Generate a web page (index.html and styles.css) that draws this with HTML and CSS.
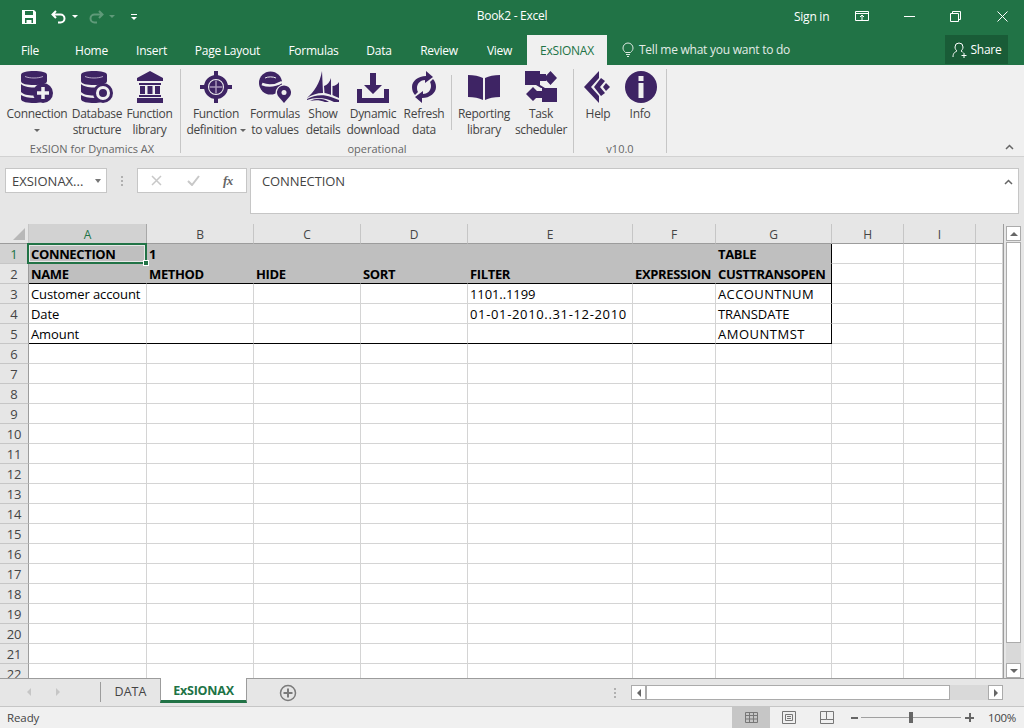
FILE: index.html
```html
<!DOCTYPE html>
<html lang="en">
<head>
<meta charset="utf-8">
<title>Book2 - Excel</title>
<link rel="stylesheet" href="styles.css">
</head>
<body>
<div class="app">
  <header class="titlebar">
    <div class="qat">
      <svg class="q-save" width="16" height="16" viewBox="0 0 16 16"><path d="M1 1h12l2 2v12H1z M4 2v4h8V2z M4 9v5h1.500v-3h5v3H12V9z" fill="#fff" fill-rule="evenodd"/></svg>
      <svg class="q-undo" width="16" height="14" viewBox="0 0 16 14"><path d="M5 1L1.500 4.500 5 8M2 4.500h7.500a4 4 0 0 1 0 8H7" fill="none" stroke="#fff" stroke-width="2"/></svg>
      <span class="caret"></span>
      <svg class="q-redo" width="16" height="14" viewBox="0 0 16 14"><path d="M11 1l3.500 3.500L11 8M14 4.500H6.500a4 4 0 0 0 0 8H9" fill="none" stroke="#5f9a79" stroke-width="2"/></svg>
      <span class="caret dim"></span>
      <span class="q-more"></span>
    </div>
    <div class="doc-title">Book2 - Excel</div>
    <div class="win">
      <span class="sign">Sign in</span>
      <svg class="w-disp" width="14" height="11" viewBox="0 0 14 11"><path d="M.5.500h13v9H.5zM.5 2.500h13M7 9V4.500M5 6l2-2 2 2" fill="none" stroke="#fff"/></svg>
      <svg class="w-min" width="11" height="1" viewBox="0 0 11 1"><path d="M0 .500h11" stroke="#fff"/></svg>
      <svg class="w-res" width="11" height="11" viewBox="0 0 11 11"><path d="M.5 2.500h8v8h-8zM2.500 2.500v-2h8v8h-2" fill="none" stroke="#fff"/></svg>
      <svg class="w-close" width="11" height="11" viewBox="0 0 11 11"><path d="M.5.500l10 10M10.500.500l-10 10" stroke="#fff"/></svg>
    </div>
  </header>
  <nav class="tabs">
    <span class="tab t-file">File</span>
    <span class="tab t-home">Home</span>
    <span class="tab t-insert">Insert</span>
    <span class="tab t-page">Page Layout</span>
    <span class="tab t-form">Formulas</span>
    <span class="tab t-data">Data</span>
    <span class="tab t-review">Review</span>
    <span class="tab t-view">View</span>
    <span class="tab t-ex active">ExSIONAX</span>
    <svg class="bulb" width="12" height="15" viewBox="0 0 12 15"><path d="M3.500 10.500C2 9 1 8 1 6a5 5 0 0 1 10 0c0 2-1 3-2.500 4.500zM4 12.500h4M5 14.500h2" fill="none" stroke="#dfeae3"/></svg>
    <span class="tell">Tell me what you want to do</span>
    <span class="share">
      <svg width="16" height="16" viewBox="0 0 16 16"><path d="M1 15c0-4 2-5 4-6-1-1-2-2-2-4a4 4 0 0 1 8 0c0 2-1 3-2 4 1 .4 1.500.8 2 1.500M12 11v5M9.500 13.500h5" fill="none" stroke="#fff"/></svg>
      Share
    </span>
  </nav>

  <section class="ribbon">
    <div class="group g1">
      <div class="btns">
        <div class="btn b-conn">
          <svg class="ico" width="32" height="32" viewBox="0 0 32 32"><path class="p" d="M0 4C0 1 6 0 13 0s13 1 13 4v6c0 3-6 4-13 4S0 13 0 10z"/><path d="M4 5.500c5 2 13 2 18 0" fill="none" stroke="#b7a9c6"/><path class="p" d="M0 13c2 2 7 3.500 13 3.500S24 15 26 13v5c-3 1-6 4-7 6-2 .4-4 .5-6 .5-6 0-11-1-13-3.500z"/><path class="p" d="M0 24c3 2 8 3 13 3h5c.4 1.500 1 3 2 4-2 .6-4 1-7 1-6 0-13-1-13-4z"/><circle class="p" cx="22" cy="22" r="10"/><path d="M22 16v12M16 22h12" stroke="#f0f0f0" stroke-width="3.500"/></svg>
          <span class="lbl">Connection<br><i class="dd"></i></span>
        </div>
        <div class="btn b-db">
          <svg class="ico" width="32" height="32" viewBox="0 0 32 32"><path class="p" d="M0 4C0 1 6 0 13 0s13 1 13 4v6c0 3-6 4-13 4S0 13 0 10z"/><path d="M4 5.500c5 2 13 2 18 0" fill="none" stroke="#b7a9c6"/><path class="p" d="M0 13c2 2 7 3.500 13 3.500S24 15 26 13v5c-3 1-6 4-7 6-2 .4-4 .5-6 .5-6 0-11-1-13-3.500z"/><path class="p" d="M0 24c3 2 8 3 13 3h5c.4 1.500 1 3 2 4-2 .6-4 1-7 1-6 0-13-1-13-4z"/><circle class="p" cx="22" cy="22" r="10"/><circle cx="22" cy="22" r="5.500" fill="none" stroke="#f0f0f0" stroke-width="3"/></svg>
          <span class="lbl">Database<br>structure</span>
        </div>
        <div class="btn b-lib">
          <svg class="ico" width="26" height="32" viewBox="0 0 26 32"><path class="p" d="M13 0l13 7v3H0V7zM0 27h26v5H0zM2 12h22v2H2zM2 24h22v2H2zM3 15h5v8H3zM10.500 15h5v8h-5zM18 15h5v8h-5z"/></svg>
          <span class="lbl">Function<br>library</span>
        </div>
      </div>
      <div class="gname">ExSION for Dynamics AX</div>
    </div>
    <div class="group g2">
      <div class="btns">
        <div class="btn b-fd">
          <svg class="ico" width="32" height="32" viewBox="0 0 32 32"><circle cx="16" cy="16" r="10" fill="none" stroke="#3e2464" stroke-width="4"/><path class="p" d="M14 0h4v6h-4zM14 26h4v6h-4zM0 14h6v4H0zM26 14h6v4h-6z"/><circle class="p" cx="16" cy="16" r="7"/><path d="M16 9.500v13M9.500 16h13" stroke="#a997bb" stroke-width="1.500"/></svg>
          <span class="lbl">Function<br>definition <i class="dd"></i></span>
        </div>
        <div class="btn b-fv">
          <svg class="ico" width="32" height="32" viewBox="0 0 32 32"><circle class="p" cx="11.500" cy="12" r="11.500"/><path d="M6 7c3-1.500 8-1.500 11 0" fill="none" stroke="#f0f0f0"/><path d="M3 13c6 2.500 13 2 20-2" fill="none" stroke="#f0f0f0" stroke-width="2.500"/><circle cx="25" cy="22" r="8.500" fill="#f0f0f0"/><path class="p" d="M25 32l-6-7a7 7 0 1 1 12 0z"/><circle cx="25" cy="21.500" r="2.500" fill="#f0f0f0"/></svg>
          <span class="lbl">Formulas<br>to values</span>
        </div>
        <div class="btn b-sd">
          <svg class="ico" width="32" height="32" viewBox="0 0 32 32"><path class="p" d="M15 0l1 22C10 22 4 24 0 27 7 21 13 12 15 0zM24 7v17c-2-1-5-2-6.500-2L17 15c3-1 6-4 7-8zM32 11v16c-2-1-5-2-6.500-3v-9c2.500 0 5.500-2 6.500-4zM0 28c7-4 16-5 24-2l8 3v2h-5C18 26 8 26 0 29zM3 30c6-3 13-3 19 1h-4c-5-2-10-2-15-1z"/></svg>
          <span class="lbl">Show<br>details</span>
        </div>
        <div class="btn b-dl">
          <svg class="ico down" width="32" height="30" viewBox="0 0 32 30"><path class="p" d="M13 0h6v12h6L16 21 7 12h6zM0 16h5v9h22v-9h5v14H0z"/></svg>
          <span class="lbl">Dynamic<br>download</span>
        </div>
        <div class="btn b-rf">
          <svg class="ico" width="24" height="32" viewBox="0 0 24 32"><path class="p" d="M14 0l7 6-8 6V9C9 9 5 12 5 17c0 2 .5 3 1 4l-3 3c-2-2-3-5-3-8C0 10 6 5 14 5zM10 32l-7-6 8-6v3c4 0 8-3 8-8 0-2-.5-3-1-4l3-3c2 2 3 5 3 8 0 6-6 11-14 11z"/></svg>
          <span class="lbl">Refresh<br>data</span>
        </div>
        <span class="inner-sep"></span>
        <div class="btn b-rl">
          <svg class="ico book" width="32" height="25" viewBox="0 0 32 25"><path class="p" d="M0 0c6 0 11 1 15 3v22c-4-2-9-3-15-3zM32 0c-6 0-11 1-15 3v22c4-2 9-3 15-3z"/></svg>
          <span class="lbl">Reporting<br>library</span>
        </div>
        <div class="btn b-ts">
          <svg class="ico tasks" width="32" height="31" viewBox="0 0 32 31"><path class="p" d="M0 0h15v14H0zM15 3h6v7h-6zM25.500 0l6.500 7-6.500 7-6.500-7zM17 17h15v14H17zM11 20h7v7h-7zM8 16l7 7-7 7-7-7zM11 14h4l5 3h-4z"/></svg>
          <span class="lbl">Task<br>scheduler</span>
        </div>
      </div>
      <div class="gname">operational</div>
    </div>
    <div class="group g3">
      <div class="btns">
        <div class="btn b-hp">
          <svg class="ico help" width="26" height="32" viewBox="0 0 26 32"><path class="p" d="M0 16L15 0v7L7 16l8 9v7zM17 7l4 3-5 6 5 6-4 3-7-9zM22 12l4 4-4 4-3-4z"/></svg>
          <span class="lbl">Help</span>
        </div>
        <div class="btn b-in">
          <svg class="ico info" width="32" height="32" viewBox="0 0 32 32"><circle class="p" cx="16" cy="16" r="16"/><path d="M13.500 5h5v5h-5zM13.500 12h5v15h-5z" fill="#f0f0f0"/></svg>
          <span class="lbl">Info</span>
        </div>
      </div>
      <div class="gname">v10.0</div>
    </div>
    <svg class="collapse" width="9" height="6" viewBox="0 0 9 6"><path d="M1 5l3.500-3.500L8 5" fill="none" stroke="#666" stroke-width="1.500"/></svg>
  </section>

  <section class="formula">
    <div class="namebox"><span>EXSIONAX...</span><i class="nb-caret"></i></div>
    <div class="fdots"><i></i><i></i><i></i></div>
    <div class="fbtns">
      <svg width="11" height="11" viewBox="0 0 11 11"><path d="M1 1l9 9M10 1l-9 9" stroke="#c8c8c8" stroke-width="1.500"/></svg>
      <svg width="13" height="11" viewBox="0 0 13 11"><path d="M1 6l4 4 7-9" fill="none" stroke="#c8c8c8" stroke-width="2"/></svg>
      <span class="fx">fx</span>
    </div>
    <div class="finput"><span>CONNECTION</span>
      <svg class="fcollapse" width="9" height="6" viewBox="0 0 9 6"><path d="M1 5l3.500-3.500L8 5" fill="none" stroke="#666" stroke-width="1.500"/></svg>
    </div>
  </section>

  <section class="sheet">
    <div class="gridwrap">
      <table class="grid">
        <colgroup><col class="c0"><col class="ca"><col class="cb"><col class="cb"><col class="cb"><col class="ce"><col class="cf"><col class="cg"><col class="ch"><col class="ch"><col class="cj"></colgroup>
        <thead><tr><th class="corner"><i></i></th><th class="sel">A</th><th>B</th><th>C</th><th>D</th><th>E</th><th>F</th><th>G</th><th>H</th><th>I</th><th class="last"></th></tr></thead>
        <tbody>
          <tr class="hd"><th class="sel">1</th><td class="b active-cell">CONNECTION<span class="fill-handle"></span></td><td class="b">1</td><td></td><td></td><td></td><td></td><td class="b ed">TABLE</td><td class="plain"></td><td class="plain"></td><td class="plain"></td></tr>
          <tr class="hd end"><th>2</th><td class="b">NAME</td><td class="b">METHOD</td><td class="b">HIDE</td><td class="b">SORT</td><td class="b">FILTER</td><td class="b">EXPRESSION</td><td class="b ed">CUSTTRANSOPEN</td><td class="plain"></td><td class="plain"></td><td class="plain"></td></tr>
          <tr><th>3</th><td>Customer account</td><td></td><td></td><td></td><td>1101..1199</td><td></td><td class="ed sp-acc">ACCOUNTNUM</td><td></td><td></td><td></td></tr>
          <tr><th>4</th><td>Date</td><td></td><td></td><td></td><td class="sp-date">01-01-2010..31-12-2010</td><td></td><td class="ed">TRANSDATE</td><td></td><td></td><td></td></tr>
          <tr class="end"><th>5</th><td>Amount</td><td></td><td></td><td></td><td></td><td></td><td class="ed sp-amt">AMOUNTMST</td><td></td><td></td><td></td></tr>
          <tr><th>6</th><td></td><td></td><td></td><td></td><td></td><td></td><td></td><td></td><td></td><td></td></tr>
          <tr><th>7</th><td></td><td></td><td></td><td></td><td></td><td></td><td></td><td></td><td></td><td></td></tr>
          <tr><th>8</th><td></td><td></td><td></td><td></td><td></td><td></td><td></td><td></td><td></td><td></td></tr>
          <tr><th>9</th><td></td><td></td><td></td><td></td><td></td><td></td><td></td><td></td><td></td><td></td></tr>
          <tr><th>10</th><td></td><td></td><td></td><td></td><td></td><td></td><td></td><td></td><td></td><td></td></tr>
          <tr><th>11</th><td></td><td></td><td></td><td></td><td></td><td></td><td></td><td></td><td></td><td></td></tr>
          <tr><th>12</th><td></td><td></td><td></td><td></td><td></td><td></td><td></td><td></td><td></td><td></td></tr>
          <tr><th>13</th><td></td><td></td><td></td><td></td><td></td><td></td><td></td><td></td><td></td><td></td></tr>
          <tr><th>14</th><td></td><td></td><td></td><td></td><td></td><td></td><td></td><td></td><td></td><td></td></tr>
          <tr><th>15</th><td></td><td></td><td></td><td></td><td></td><td></td><td></td><td></td><td></td><td></td></tr>
          <tr><th>16</th><td></td><td></td><td></td><td></td><td></td><td></td><td></td><td></td><td></td><td></td></tr>
          <tr><th>17</th><td></td><td></td><td></td><td></td><td></td><td></td><td></td><td></td><td></td><td></td></tr>
          <tr><th>18</th><td></td><td></td><td></td><td></td><td></td><td></td><td></td><td></td><td></td><td></td></tr>
          <tr><th>19</th><td></td><td></td><td></td><td></td><td></td><td></td><td></td><td></td><td></td><td></td></tr>
          <tr><th>20</th><td></td><td></td><td></td><td></td><td></td><td></td><td></td><td></td><td></td><td></td></tr>
          <tr><th>21</th><td></td><td></td><td></td><td></td><td></td><td></td><td></td><td></td><td></td><td></td></tr>
          <tr><th>22</th><td></td><td></td><td></td><td></td><td></td><td></td><td></td><td></td><td></td><td></td></tr>
        </tbody>
      </table>
    </div>
    <div class="vscroll">
      <span class="sbtn up"><i></i></span>
      <span class="vthumb"></span>
      <span class="vtrack"></span>
      <span class="sbtn down"><i></i></span>
    </div>
  </section>

  <section class="sheettabs">
    <i class="nav-l"></i><i class="nav-r"></i>
    <span class="st-sep"></span>
    <span class="st">DATA</span>
    <span class="st on">ExSIONAX</span>
    <svg class="plus" width="20" height="20" viewBox="0 0 20 20"><circle cx="10" cy="10" r="7.500" fill="none" stroke="#7b7b7b" stroke-width="1.500"/><path d="M10 5.500v9M5.500 10h9" stroke="#7b7b7b" stroke-width="2"/></svg>
    <div class="hdots"><i></i><i></i><i></i></div>
    <div class="hscroll">
      <span class="hbtn"><i class="hl"></i></span>
      <span class="hthumb"></span>
      <span class="htrack"></span>
      <span class="hbtn"><i class="hr"></i></span>
    </div>
  </section>

  <footer class="status">
    <span class="ready">Ready</span>
    <span class="view on">
      <svg width="13" height="11" viewBox="0 0 13 11"><path d="M.5.500h12v10H.5zM4.500.500v10M8.500.500v10M.5 3.500h12M.5 7h12" fill="none" stroke="#777"/></svg>
    </span>
    <span class="view">
      <svg width="14" height="13" viewBox="0 0 14 13"><path d="M.5.500h13v12H.5zM3.500 3.500h7v6h-7zM5 5.500h4M5 7.500h4" fill="none" stroke="#777"/></svg>
    </span>
    <span class="view">
      <svg width="14" height="13" viewBox="0 0 14 13"><path d="M.5.500h13v12H.5zM.5 8.500h6v-8M6.500 8.500h7" fill="none" stroke="#777"/></svg>
    </span>
    <span class="zminus"></span>
    <span class="zslider"><i></i></span>
    <span class="zplus"></span>
    <span class="zpct">100%</span>
  </footer>
</div>
</body>
</html>
```

FILE: styles.css
```css
* { box-sizing: border-box; }
html, body { margin: 0; padding: 0; }
body { font-family: "Open Sans", "Noto Sans", sans-serif; overflow: hidden; }
.app { width: 1024px; height: 728px; display: flex; flex-direction: column; overflow: hidden; background: #e6e6e6; }

/* Title bar */
.titlebar { height: 33px; background: #217346; color: #fff; display: flex; align-items: center; font-size: 12px; letter-spacing: -.25px; flex: none; }
.qat { width: 424px; display: flex; align-items: center; padding-left: 21px; }
.q-undo { margin-left: 14px; }
.caret { width: 0; height: 0; border: 3px solid transparent; border-top-color: #fff; border-bottom: 0; margin-left: 5px; }
.caret.dim { border-top-color: #5f9a79; }
.q-redo { margin-left: 10px; }
.qat .dim { margin-left: 5px; }
.q-more { margin-left: 16px; width: 6px; height: 6px; border-top: 1px solid #fff; }
.q-more::after { content: ""; display: block; margin-top: 2px; border: 3px solid transparent; border-top-color: #fff; border-bottom: 0; }
.doc-title { width: 176px; text-align: center; margin-top: -2px; }
.win { flex: 1; display: flex; align-items: center; padding-left: 194px; }
.w-disp { margin-left: 26px; }
.w-min { margin-left: 35px; }
.w-res { margin-left: 35px; }
.w-close { margin-left: 36px; }

/* Tabs */
.tabs { height: 32px; background: #217346; color: #fff; display: flex; font-size: 12px; letter-spacing: -.25px; flex: none; }
.tab { height: 30px; margin-top: 2px; display: flex; align-items: center; justify-content: center; padding-top: 1px; }
.t-file { width: 60px; }
.t-home { width: 63px; }
.t-insert { width: 57px; }
.t-page { width: 95px; }
.t-form { width: 77px; }
.t-data { width: 54px; }
.t-review { width: 66px; }
.t-view { width: 55px; }
.t-ex { width: 80px; }
.tab.active { background: #f0f0f0; color: #217346; }
.bulb { margin: 9px 0 0 15px; }
.tell { margin: 0 0 0 5px; line-height: 32px; padding-top: 1px; color: #e3ece6; width: 306px; white-space: nowrap; }
.share { width: 63px; height: 29px; margin-top: 2px; background: #195c37; display: flex; align-items: center; justify-content: center; gap: 3px; }

/* Ribbon */
.ribbon { height: 92px; background: #f0f0f0; border-bottom: 1px solid #d2d2d2; display: flex; color: #444; font-size: 12px; letter-spacing: -.3px; flex: none; }
.group { height: 84px; margin-top: 4px; border-right: 1px solid #c6c6c6; display: flex; flex-direction: column; }
.g1 { width: 181px; padding-left: 4px; }
.g2 { width: 393px; padding-left: 6px; }
.g3 { width: 93px; }
.btns { display: flex; height: 72px; flex: none; }
.btn { display: flex; flex-direction: column; align-items: center; padding-top: 2px; }
.ico { flex: none; }
.ico.down { margin: 2px 0 0; }
.ico.book { margin: 4px 0 3px; }
.ico.tasks { margin-bottom: 1px; margin-left: -1px; }
.ico.help { margin-right: 3px; }
.ico.info { margin-left: 2px; }
.p { fill: #3e2464; }
.lbl { display: block; margin-top: 3px; text-align: center; line-height: 16px; white-space: nowrap; }
.dd { display: inline-block; vertical-align: middle; width: 0; height: 0; border-left: 3px solid transparent; border-right: 3px solid transparent; border-top: 3px solid #666; }
.b-conn { width: 66px; }
.b-db { width: 54px; }
.b-lib { width: 51px; }
.b-fd { width: 58px; }
.b-fv { width: 60px; }
.b-sd { width: 36px; }
.b-dl { width: 64px; }
.b-rf { width: 38px; }
.inner-sep { width: 1px; height: 55px; margin: 6px 6px 0 8px; background: #c6c6c6; }
.b-rl { width: 52px; }
.b-ts { width: 62px; }
.b-hp { width: 48px; }
.b-in { width: 36px; }
.gname { text-align: center; line-height: 16px; color: #666; font-size: 11px; letter-spacing: 0; }
.g2 .gname { padding-right: 6px; }
.collapse { margin: 79px 0 0 338px; }

/* Formula bar */
.formula { height: 67px; background: #e6e6e6; display: flex; align-items: flex-start; padding: 11px 5px 0 5px; font-size: 12px; color: #444; flex: none; }
.namebox { width: 102px; height: 25px; background: #fff; border: 1px solid #c6c6c6; display: flex; align-items: center; justify-content: space-between; padding: 0 5px 0 6px; font-size: 13px; letter-spacing: 0; }
.nb-caret { width: 0; height: 0; border: 3.500px solid transparent; border-top: 4px solid #777; border-bottom: 0; }
.fdots { width: 30px; height: 25px; display: flex; flex-direction: column; align-items: center; justify-content: center; gap: 2px; }
.fdots i { width: 2px; height: 2px; background: #b0b0b0; }
.fbtns { width: 110px; height: 25px; background: #fff; border: 1px solid #c6c6c6; display: flex; align-items: center; padding-left: 13px; }
.fbtns svg:nth-child(2) { margin-left: 25px; }
.fx { margin-left: 23px; font-family: "Liberation Serif", serif; font-style: italic; font-weight: bold; font-size: 13px; color: #666; letter-spacing: -.5px; }
.finput { width: 769px; height: 46px; margin-left: 3px; background: #fff; border: 1px solid #c6c6c6; padding: 3px 0 0 11px; display: flex; justify-content: space-between; letter-spacing: -.1px; font-size: 13px; }
.fcollapse { margin: 7px 5px 0 0; }

/* Sheet */
.sheet { height: 455px; display: flex; border-bottom: 1px solid #9c9c9c; background: #e6e6e6; flex: none; }
.gridwrap { width: 1004px; height: 454px; overflow: hidden; background: #fff; border-right: 1px solid #9c9c9c; }
.grid { table-layout: fixed; border-collapse: separate; border-spacing: 0; width: 1003px; font-size: 13px; color: #000; letter-spacing: -.1px; }
.c0 { width: 29px; }
.ca { width: 118px; }
.cb { width: 107px; }
.ce { width: 165px; }
.cf { width: 83px; }
.cg { width: 116px; }
.ch { width: 72px; }
.cj { width: 27px; }
.grid th { height: 20px; padding: 0; font-weight: normal; background: #e6e6e6; color: #444; font-size: 12px; text-align: center; }
.grid thead th { border-right: 1px solid #c6c6c6; border-bottom: 1px solid #9c9c9c; padding-top: 1px; position: relative; }
.grid thead th.sel { background: #d2d2d2; color: #217346; border-right-color: #a8a8a8; }
.grid thead th.last { border-right: 0; }
.grid tbody th { border-right: 1px solid #9c9c9c; border-bottom: 1px solid #c6c6c6; font-size: 13px; }
.grid tbody th.sel { background: #d2d2d2; color: #217346; }
.corner i { position: absolute; right: 3px; bottom: 3px; width: 0; height: 0; border-left: 12px solid transparent; border-bottom: 12px solid #b8b8b8; }
.grid td { height: 20px; padding: 0 0 0 2px; border-right: 1px solid #d4d4d4; border-bottom: 1px solid #d4d4d4; white-space: nowrap; overflow: visible; line-height: 18px; vertical-align: middle; }
.grid tr.hd td { background: #bfbfbf; border-color: #bfbfbf; }
.grid tr.hd td.plain { background: #fff; border-color: #d4d4d4; }
.grid td.b { font-weight: bold; letter-spacing: -.35px; }
.grid td.sp-acc { letter-spacing: .4px; }
.grid td.sp-amt { letter-spacing: .5px; }
.grid td.sp-date { letter-spacing: .65px; }
.grid tr.end td:nth-child(-n+8) { border-bottom-color: #000; }
.grid td.ed, .grid tr.hd td.ed { border-right-color: #000; }
.active-cell { position: relative; }
.active-cell::before { content: ""; position: absolute; left: -2px; top: -1px; right: -1px; bottom: -1px; border: 2px solid #217346; box-shadow: inset 0 0 0 1px #e8e8e8; pointer-events: none; }
.fill-handle { position: absolute; right: -3px; bottom: -3px; width: 6px; height: 6px; background: #217346; border: 1px solid #fff; }

.vscroll { width: 20px; padding: 2px 3px 0 2px; display: flex; flex-direction: column; }
.sbtn { height: 15px; flex: none; background: #fff; border: 1px solid #ababab; display: flex; align-items: center; justify-content: center; }
.sbtn i { width: 0; height: 0; border-left: 4px solid transparent; border-right: 4px solid transparent; }
.up i { border-bottom: 4px solid #666; }
.down i { border-top: 4px solid #666; }
.vthumb { height: 401px; flex: none; margin-top: 1px; background: #fff; border: 1px solid #ababab; }
.vtrack { flex: 1; background: #d9d9d9; }

/* Sheet tabs */
.sheettabs { height: 28px; display: flex; align-items: flex-start; background: #e6e6e6; border-bottom: 1px solid #c6c6c6; font-size: 12.500px; flex: none; }
.nav-l, .nav-r { width: 0; height: 0; margin-top: 9px; border-top: 4px solid transparent; border-bottom: 4px solid transparent; }
.nav-l { margin-left: 27px; border-right: 4px solid #c6c6c6; }
.nav-r { margin-left: 25px; border-left: 4px solid #c6c6c6; }
.st-sep { width: 1px; height: 20px; margin: 3px 0 0 40px; background: #9c9c9c; }
.st { height: 24px; width: 59px; text-align: center; line-height: 25px; color: #444; letter-spacing: 0; }
.st.on { width: 87px; height: 25px; margin-top: -1px; background: #fff; color: #217346; font-weight: bold; border: 1px solid #9c9c9c; border-top: 0; border-bottom: 3px solid #217346; letter-spacing: -.2px; line-height: 26px; }
.plus { margin: 4px 0 0 31px; }
.hdots { margin: 9px 0 0 316px; display: flex; flex-direction: column; gap: 2px; width: 2px; }
.hdots i { width: 2px; height: 2px; background: #b0b0b0; }
.hscroll { margin: 6px 0 0 15px; width: 372px; height: 15px; display: flex; }
.hbtn { width: 15px; height: 15px; flex: none; background: #fff; border: 1px solid #ababab; display: flex; align-items: center; justify-content: center; }
.hl { width: 0; height: 0; border-top: 4px solid transparent; border-bottom: 4px solid transparent; border-right: 4px solid #666; }
.hr { width: 0; height: 0; border-top: 4px solid transparent; border-bottom: 4px solid transparent; border-left: 4px solid #666; }
.hthumb { width: 304px; height: 15px; background: #fff; border: 1px solid #ababab; }
.htrack { flex: 1; background: #d9d9d9; }

/* Status */
.status { height: 21px; background: #f0f0f0; display: flex; align-items: center; font-size: 11.500px; color: #444; flex: none; }
.ready { width: 732px; padding-left: 7px; padding-bottom: 1px; letter-spacing: -.1px; }
.view { width: 38px; height: 21px; display: flex; align-items: center; justify-content: center; }
.view.on { background: #c6c6c6; }
.zminus { width: 7px; height: 2px; margin-left: 5px; background: #666; }
.zslider { width: 100px; height: 1px; margin-left: 3px; background: #a0a0a0; display: flex; justify-content: center; align-items: center; }
.zslider i { width: 4px; height: 11px; flex: none; background: #666; }
.zplus { width: 9px; height: 9px; margin-left: 4px; background: linear-gradient(#666,#666) center/9px 2px no-repeat, linear-gradient(#666,#666) center/2px 9px no-repeat; }
.zpct { margin-left: 14px; letter-spacing: -.3px; }
```
